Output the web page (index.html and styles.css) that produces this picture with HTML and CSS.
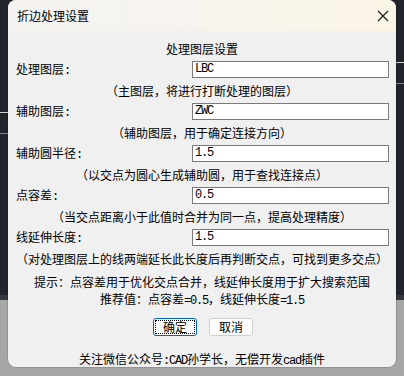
FILE: index.html
```html
<!DOCTYPE html>
<html lang="zh">
<head>
<meta charset="utf-8">
<title>折边处理设置</title>
<link rel="stylesheet" href="styles.css">
</head>
<body>
<div class="dialog">
  <div class="titlebar">
    <span class="title">折边处理设置</span>
    <svg class="close" width="12" height="12" viewBox="0 0 12 12"><path d="M1 1 L11 11 M11 1 L1 11" stroke="#1a1a1a" stroke-width="1.1" fill="none"/></svg>
  </div>
  <div class="content">
    <div class="line center">处理图层设置</div>
    <div class="line row"><span class="label">处理图层<span class="a">:</span></span><div class="input">LBC</div></div>
    <div class="line center">（主图层，将进行打断处理的图层）</div>
    <div class="line row"><span class="label">辅助图层<span class="a">:</span></span><div class="input">ZWC</div></div>
    <div class="line center">（辅助图层，用于确定连接方向）</div>
    <div class="line row"><span class="label">辅助圆半径<span class="a">:</span></span><div class="input">1.5</div></div>
    <div class="line center">（以交点为圆心生成辅助圆，用于查找连接点）</div>
    <div class="line row"><span class="label">点容差<span class="a">:</span></span><div class="input">0.5</div></div>
    <div class="line center">（当交点距离小于此值时合并为同一点，提高处理精度）</div>
    <div class="line row"><span class="label">线延伸长度<span class="a">:</span></span><div class="input">1.5</div></div>
    <div class="line center">（对处理图层上的线两端延长此长度后再判断交点，可找到更多交点）</div>
    <div class="tips">
      <div class="tip">提示：点容差用于优化交点合并，线延伸长度用于扩大搜索范围</div>
      <div class="tip">推荐值：点容差<span class="a">=0.5</span>，线延伸长度<span class="a">=1.5</span></div>
    </div>
    <div class="buttons">
      <button class="btn primary"><span class="focus">确定</span></button>
      <button class="btn">取消</button>
    </div>
    <div class="footer">关注微信公众号<span class="a">:CAD</span>孙学长，无偿开发<span class="a">cad</span>插件</div>
  </div>
</div>
</body>
</html>
```
FILE: styles.css
```css
html, body {
  margin: 0;
  height: 376px;
  overflow: hidden;
}
body {
  padding: 0 8px;
  font-family: "Noto Sans CJK SC", "Noto Sans", sans-serif;
  font-size: 12px;
  color: #000;
  background:
    linear-gradient(#cfd3d6, #cfd3d6) 0 112px / 8px 1px no-repeat,
    linear-gradient(#2aa7a8, #2aa7a8) 0 133px / 8px 1px no-repeat,
    linear-gradient(#cfd3d6, #cfd3d6) 396px 62px / 8px 1px no-repeat,
    linear-gradient(#2aa7a8, #2aa7a8) 396px 83px / 8px 1px no-repeat,
    linear-gradient(to bottom, #1f252b 0 295px, #32383e 295px 300px, #a7a7a7 300px);
}
.a {
  font-family: "Liberation Mono", monospace;
  letter-spacing: -1.2px;
}
.dialog {
  width: 388px;
  height: 367px;
  background: #f0f0f0;
  border-radius: 8px;
  overflow: hidden;
  box-shadow: 0 0 0 1px rgba(0,0,0,0.12);
  display: flex;
  flex-direction: column;
}
.titlebar {
  height: 31px;
  flex: none;
  display: flex;
  align-items: center;
  justify-content: space-between;
  padding: 0 7px 0 9px;
  background: linear-gradient(to right, #f4f3f1 0%, #f7f4ee 50%, #fbf5e5 100%);
}
.title {
  font-size: 12px;
  line-height: 14px;
}
.content {
  padding-top: 7px;
  display: flex;
  flex-direction: column;
}
.line {
  height: 21px;
  line-height: 21px;
  white-space: nowrap;
}
.center {
  text-align: center;
}
.row {
  display: flex;
  align-items: center;
  padding: 0 7px 0 8px;
}
.label {
  width: 176px;
  flex: none;
}
.input {
  flex: 1;
  height: 17px;
  box-sizing: border-box;
  border: 1px solid #7a7a7a;
  background: #fff;
  font-family: "Liberation Mono", monospace;
  letter-spacing: -1.2px;
  font-size: 12px;
  line-height: 15px;
  padding-left: 2px;
}
.tips {
  margin-top: 4px;
  text-align: center;
}
.tip {
  height: 17px;
  line-height: 17px;
  white-space: nowrap;
}
.buttons {
  margin-top: 11px;
  display: flex;
  justify-content: center;
  gap: 12px;
  padding-left: 2px;
}
.btn {
  width: 44px;
  height: 18px;
  box-sizing: border-box;
  border: 1px solid #d0d0d0;
  border-radius: 3px;
  background: #fdfdfd;
  font-family: "Noto Sans CJK SC", sans-serif;
  font-size: 12px;
  color: #000;
  padding: 0;
  display: flex;
  align-items: center;
  justify-content: center;
  line-height: 14px;
}
.btn.primary {
  border: 1px solid #0067c0;
  padding: 1px;
}
.focus {
  display: flex;
  align-items: center;
  justify-content: center;
  width: 100%;
  height: 100%;
  box-sizing: border-box;
  border: 1px dotted #000;
}
.footer {
  margin-top: 14px;
  height: 17px;
  line-height: 17px;
  text-align: center;
  white-space: nowrap;
}
```
